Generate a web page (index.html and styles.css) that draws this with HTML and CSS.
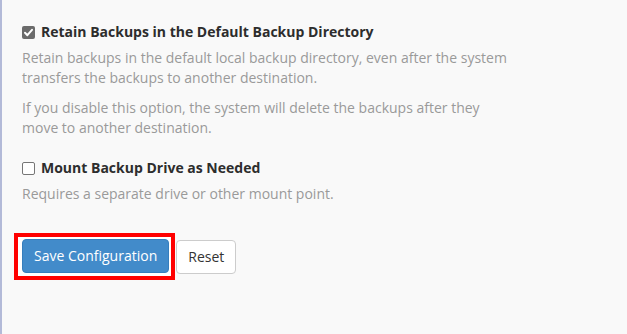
FILE: index.html
```html
<!DOCTYPE html>
<html lang="en">
<head>
<meta charset="utf-8">
<title>Backup Configuration</title>
<link rel="stylesheet" href="styles.css">
</head>
<body>
<div class="page">
  <div class="option">
    <label class="option-label">
      <span class="cb cb-checked">
        <svg viewBox="0 0 13 13" width="13" height="13"><polyline points="3,6.8 5.4,9.2 10,3.8" fill="none" stroke="#fff" stroke-width="2" stroke-linecap="round" stroke-linejoin="round"/></svg>
      </span>
      <span>Retain Backups in the Default Backup Directory</span>
    </label>
    <p class="help">Retain backups in the default local backup directory, even after the system transfers the backups to another destination.</p>
    <p class="help">If you disable this option, the system will delete the backups after they move to another destination.</p>
  </div>
  <div class="option">
    <label class="option-label">
      <span class="cb"></span>
      <span>Mount Backup Drive as Needed</span>
    </label>
    <p class="help">Requires a separate drive or other mount point.</p>
  </div>
  <div class="actions">
    <span class="highlight"><button class="btn btn-primary" type="button">Save Configuration</button></span>
    <button class="btn btn-default" type="button">Reset</button>
  </div>
</div>
</body>
</html>
```

FILE: styles.css
```css
html, body {
  margin: 0;
  padding: 0;
  background: #f9f9f9;
}
body {
  font-family: "Open Sans", "DejaVu Sans", sans-serif;
  font-size: 14px;
  line-height: 20px;
  color: #333;
}
.page {
  box-sizing: border-box;
  height: 334px;
  border-left: 2px solid #b3bad8;
  background: #f9f9f9;
  padding: 22px 0 0 20px;
}
.option {
  width: 490px;
}
.option + .option {
  margin-top: 20px;
}
.option-label {
  display: flex;
  align-items: center;
  gap: 6px;
  font-weight: 700;
  color: #2d2d2d;
}
.cb {
  box-sizing: border-box;
  width: 13px;
  height: 13px;
  border-radius: 2px;
  border: 1px solid #767676;
  background: #fff;
  display: inline-flex;
  flex: none;
}
.cb-checked {
  border: none;
  background: #6b6b6b;
}
.cb svg {
  display: block;
}
.help {
  margin: 6px 0 0;
  color: #9a9a9a;
}
.help + .help {
  margin-top: 10px;
}
.actions {
  margin-top: 29px;
  margin-left: -8px;
  display: flex;
  align-items: center;
}
.highlight {
  display: inline-flex;
  border: 4px solid #ff0000;
  padding: 2px 2px 3px 4px;
  background: #fff;
}
.btn {
  font-family: "Open Sans", "DejaVu Sans", sans-serif;
  font-size: 14px;
  line-height: 20px;
  padding: 6px 11px;
  border-radius: 4px;
  border: 1px solid #ccc;
  margin: 0;
}
.btn-primary {
  background: #428bca;
  border-color: #357ebd;
  color: #fff;
}
.btn-default {
  background: #fff;
  color: #333;
  margin-left: 1px;
}
```
